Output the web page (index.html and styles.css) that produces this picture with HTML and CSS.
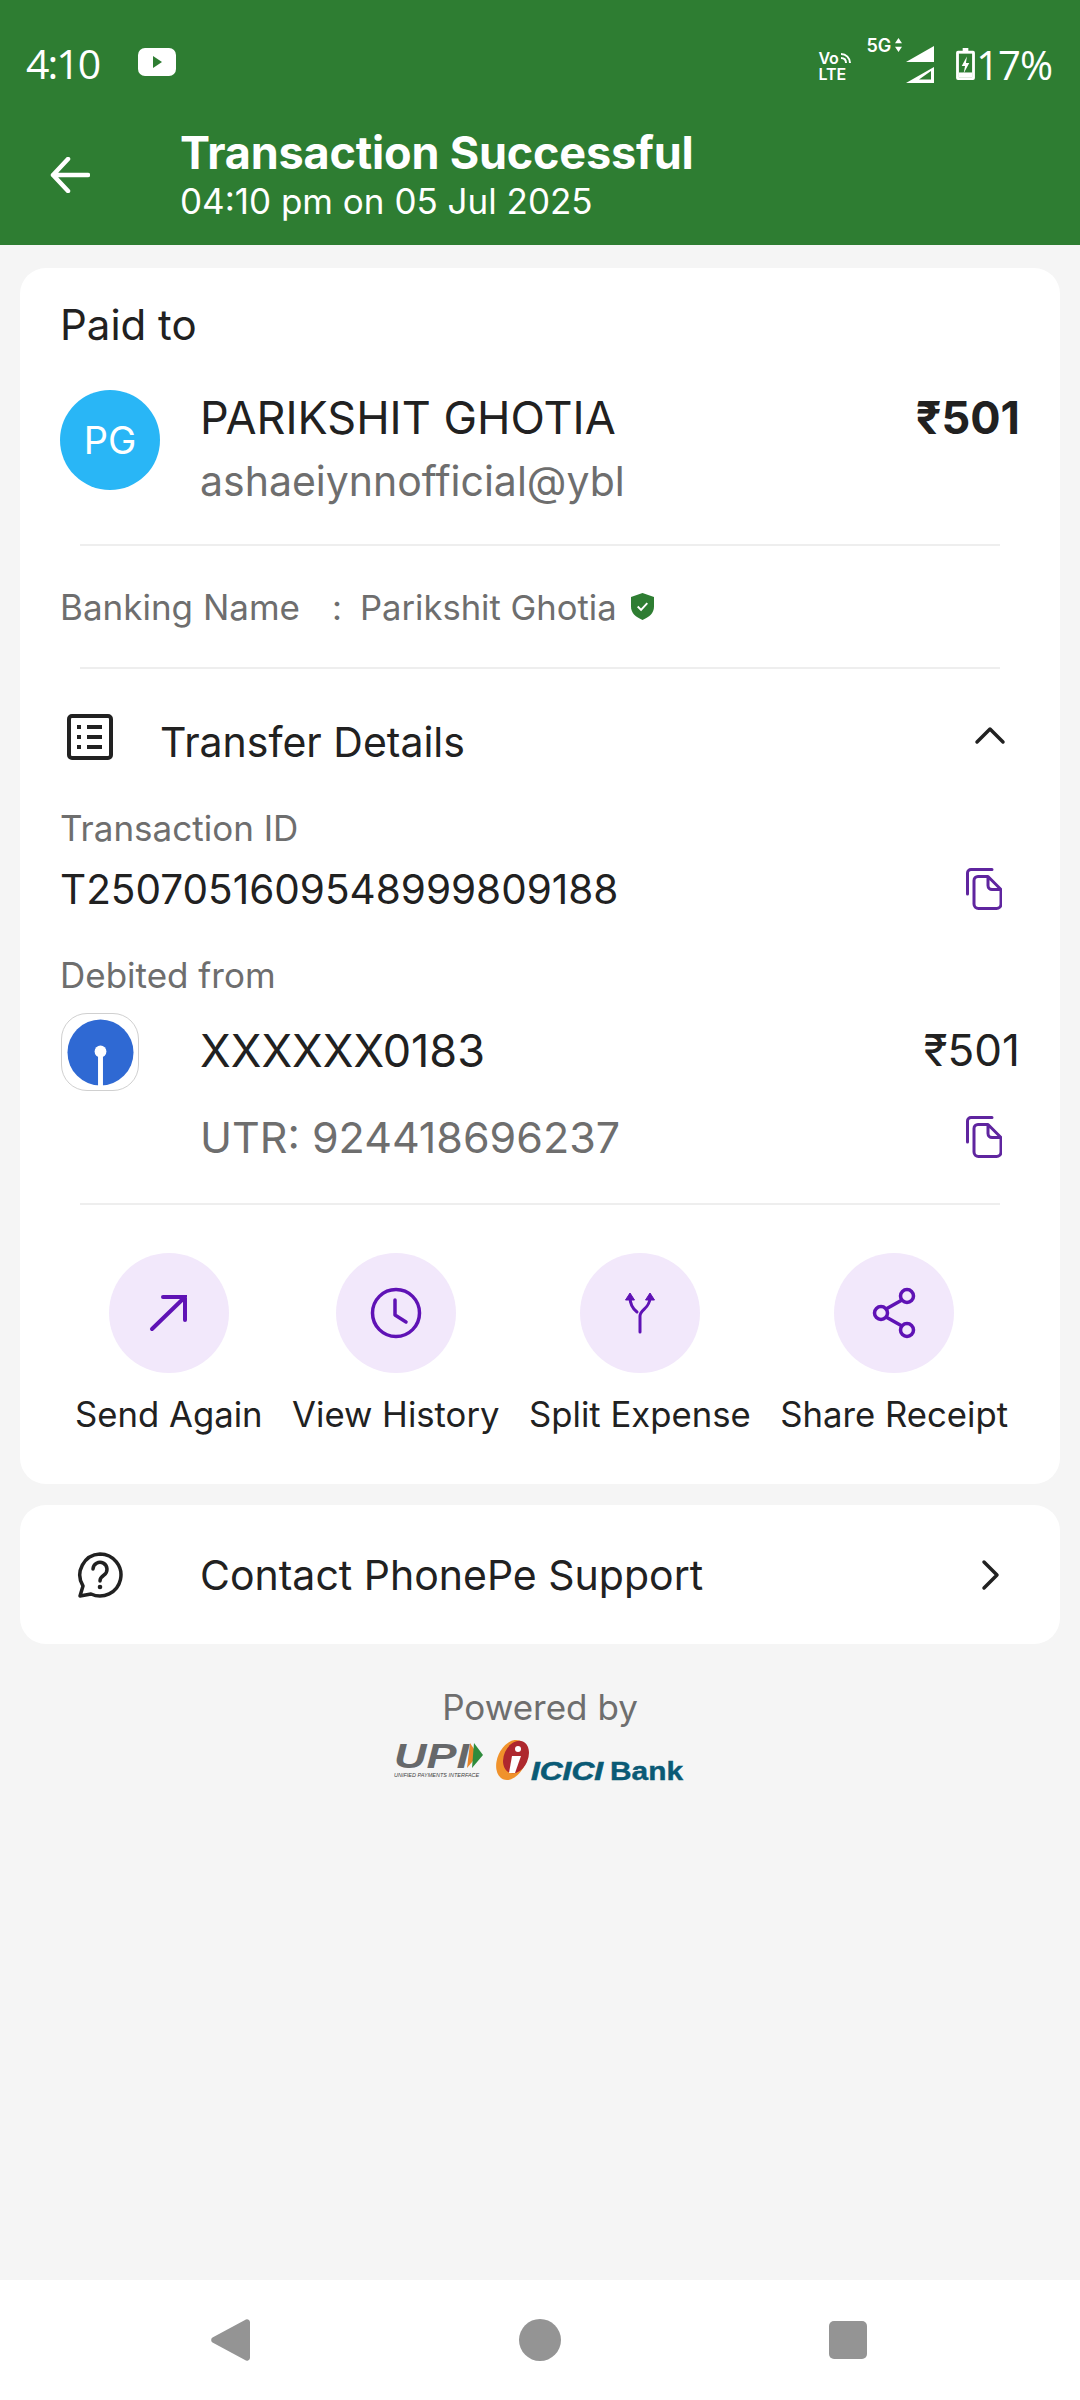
FILE: index.html
```html
<!DOCTYPE html>
<html lang="en">
<head>
    <meta charset="UTF-8">
    <meta name="viewport" content="width=device-width, initial-scale=1.0">
    <title>Transaction Successful</title>
    <link rel="stylesheet" href="styles.css">
</head>
<body>

<!-- Green Header -->
<div class="header">
    <div class="status-bar">
        <div class="status-left">
            <span class="clock">4:10</span>
            <svg class="yt-icon" viewBox="0 0 38 28"><rect width="38" height="28" rx="7" fill="#fff"/><path d="M15 8l9 6-9 6z" fill="#2e7d32"/></svg>
        </div>
        <div class="status-right">
            <div class="volte"><span>Vo<svg class="volte-waves" viewBox="0 0 12 12"><path d="M1 2c5 0 9 4 9 9M1 6c3 0 5 2 5 5" fill="none" stroke="#fff" stroke-width="2"/></svg></span><span>LTE</span></div>
            <span class="five-g">5G<svg class="five-g-arrows" viewBox="0 0 8 16"><path d="M4 0l4 6H0zM4 16l4-6H0z" fill="#fff"/></svg></span>
            <svg class="signal" viewBox="0 0 28 37"><path d="M28 0v16H0z" fill="#fff"/><path fill-rule="evenodd" d="M28 21v16H0zM25 25L13 33.500h12z" fill="#fff"/></svg>
            <svg class="battery" viewBox="0 0 20 34"><path d="M7 0h6v3h5a2 2 0 0 1 2 2v27a2 2 0 0 1-2 2H2a2 2 0 0 1-2-2V5a2 2 0 0 1 2-2h5z" fill="#fff"/><rect x="3" y="6" width="14" height="25" fill="#2e7d32"/><rect x="3" y="26" width="14" height="5" fill="#fff"/><path d="M11.500 9L6 19h3.500L8 27l6-11h-3.500z" fill="#fff"/></svg>
            <span class="battery-pct">17%</span>
        </div>
    </div>
    <div class="title-bar">
        <svg class="back-icon" viewBox="0 0 40 36"><path d="M38 18H3M18 2L3 18l15 16" fill="none" stroke="#fff" stroke-width="4.500" stroke-linecap="round" stroke-linejoin="round"/></svg>
        <div>
            <h1>Transaction Successful</h1>
            <p>04:10 pm on 05 Jul 2025</p>
        </div>
    </div>
</div>

<!-- Main Card -->
<div class="card main-card">
    <div class="paid-label">Paid to</div>

    <div class="payee-row">
        <div class="avatar">PG</div>
        <div class="payee-info">
            <div class="payee-name">PARIKSHIT GHOTIA</div>
            <div class="payee-upi">ashaeiynnofficial@ybl</div>
        </div>
        <div class="payee-amount">₹501</div>
    </div>

    <div class="divider"></div>

    <div class="banking-row">
        <span class="banking-key">Banking Name</span>
        <span class="banking-colon">:</span>
        <span>Parikshit Ghotia</span>
        <svg class="shield-icon" viewBox="0 0 24 28"><path d="M12 0l12 4v10c0 7-5 11-12 14C5 25 0 21 0 14V4z" fill="#2e7d32"/><path d="M7 14l3.500 3.500L17 10.500" fill="none" stroke="#fff" stroke-width="2"/></svg>
    </div>

    <div class="divider"></div>

    <div class="details-head">
        <svg class="list-icon" viewBox="0 0 46 46"><rect x="2" y="2" width="42" height="42" rx="3" fill="none" stroke="#212121" stroke-width="4"/><path d="M20 13h15M20 23h15M20 33h15" stroke="#212121" stroke-width="4"/><path d="M10 13h4M10 23h4M10 33h4" stroke="#212121" stroke-width="4"/></svg>
        <span class="details-title">Transfer Details</span>
        <svg class="chevron-up" viewBox="0 0 32 20"><path d="M3 17L16 4l13 13" fill="none" stroke="#212121" stroke-width="3.500" stroke-linecap="round" stroke-linejoin="round"/></svg>
    </div>

    <div class="field-label txn-label">Transaction ID</div>
    <div class="copy-row txn-row">
        <span class="txn-id">T2507051609548999809188</span>
        <svg class="copy-icon" viewBox="0 0 36 42"><path d="M1.500 26V5a3.500 3.500 0 0 1 3.500-3.500h21" fill="none" stroke="#5f259f" stroke-width="3" stroke-linecap="round"/><path d="M22 8.500H12a4 4 0 0 0-4 4V36a4.500 4.500 0 0 0 4.500 4.500h18A4.500 4.500 0 0 0 35 36V21.500L22 8.500v9a4 4 0 0 0 4 4h9" fill="none" stroke="#5f259f" stroke-width="3" stroke-linejoin="round"/></svg>
    </div>

    <div class="field-label debit-label">Debited from</div>
    <div class="bank-row">
        <div class="bank-logo">
            <svg viewBox="0 0 68 68"><circle cx="34" cy="34" r="33.500" fill="#2f69d3"/><rect x="31.500" y="34" width="5" height="34" fill="#fff"/><circle cx="34" cy="33" r="6" fill="#fff"/></svg>
        </div>
        <div class="bank-info">
            <div class="bank-line">
                <span class="account-no">XXXXXX0183</span>
                <span class="account-amount">₹501</span>
            </div>
            <div class="copy-row utr-row">
                <span class="utr">UTR: 924418696237</span>
                <svg class="copy-icon" viewBox="0 0 36 42"><path d="M1.500 26V5a3.500 3.500 0 0 1 3.500-3.500h21" fill="none" stroke="#5f259f" stroke-width="3" stroke-linecap="round"/><path d="M22 8.500H12a4 4 0 0 0-4 4V36a4.500 4.500 0 0 0 4.500 4.500h18A4.500 4.500 0 0 0 35 36V21.500L22 8.500v9a4 4 0 0 0 4 4h9" fill="none" stroke="#5f259f" stroke-width="3" stroke-linejoin="round"/></svg>
            </div>
        </div>
    </div>

    <div class="divider"></div>

    <!-- Action Buttons -->
    <div class="actions">
        <div class="action">
            <div class="action-circle">
                <svg viewBox="0 0 60 60"><path d="M13 46L46 14M24 14h22v23" fill="none" stroke="#5f12b5" stroke-width="4" stroke-linecap="round"/></svg>
            </div>
            <span>Send Again</span>
        </div>
        <div class="action">
            <div class="action-circle">
                <svg viewBox="0 0 60 60"><circle cx="30" cy="30" r="23.500" fill="none" stroke="#5f12b5" stroke-width="3.500"/><path d="M29 17v15l11 7" fill="none" stroke="#5f12b5" stroke-width="3.500" stroke-linecap="round" stroke-linejoin="round"/></svg>
            </div>
            <span>View History</span>
        </div>
        <div class="action">
            <div class="action-circle">
                <svg viewBox="0 0 60 60"><path d="M30 49V33c0-7 10-7 10-19M27 29c-4-3-7-7-7-15" fill="none" stroke="#5f12b5" stroke-width="3" stroke-linecap="round"/><path d="M15.500 17l4.500-7 4.500 7zM35.500 17l4.500-7 4.500 7z" fill="#5f12b5" stroke="#5f12b5" stroke-width="1" stroke-linejoin="round"/></svg>
            </div>
            <span>Split Expense</span>
        </div>
        <div class="action">
            <div class="action-circle">
                <svg viewBox="0 0 60 60"><circle cx="43" cy="13" r="6.500" fill="none" stroke="#5f12b5" stroke-width="3.500"/><circle cx="17" cy="30" r="6.500" fill="none" stroke="#5f12b5" stroke-width="3.500"/><circle cx="43" cy="47" r="6.500" fill="none" stroke="#5f12b5" stroke-width="3.500"/><path d="M22 26l16-9M22 34l16 9" stroke="#5f12b5" stroke-width="3.500"/></svg>
            </div>
            <span>Share Receipt</span>
        </div>
    </div>
</div>

<!-- Support Card -->
<div class="card support-card">
    <svg class="help-icon" viewBox="0 0 48 48"><path d="M24 3a21 21 0 1 1-9 40l-11 2 3-10A21 21 0 0 1 24 3z" fill="none" stroke="#212121" stroke-width="3.500" stroke-linejoin="round"/><path d="M17 18a7 7 0 1 1 11 6c-3 2-4 3-4 6" fill="none" stroke="#212121" stroke-width="3.500" stroke-linecap="round"/><circle cx="24" cy="36" r="2.300" fill="#212121"/></svg>
    <span class="support-text">Contact PhonePe Support</span>
    <svg class="chevron-right" viewBox="0 0 20 32"><path d="M4 3l13 13L4 29" fill="none" stroke="#212121" stroke-width="3.500" stroke-linecap="round" stroke-linejoin="round"/></svg>
</div>

<!-- Powered By -->
<div class="powered">
    <div class="powered-label">Powered by</div>
    <div class="powered-logos">
        <svg class="upi-logo" viewBox="0 0 90 46">
            <text x="0" y="31" class="upi-text" textLength="75" lengthAdjust="spacingAndGlyphs">UPI</text>
            <path d="M76 6l8 12-11 13z" fill="#e8862a"/><path d="M80 6l9 12-11 13z" fill="#2e8b3c"/>
            <text x="0" y="40" class="upi-sub">UNIFIED PAYMENTS INTERFACE</text>
        </svg>
        <svg class="icici-logo" viewBox="0 0 190 50">
            <ellipse cx="15.500" cy="23" rx="14" ry="21" transform="rotate(24 15.500 23)" fill="#f0922b"/>
            <ellipse cx="20" cy="20" rx="12" ry="17" transform="rotate(24 20 20)" fill="#ae282e"/>
            <circle cx="22" cy="12" r="3" fill="#fff"/>
            <path d="M16 19h9l-6 17h-6z" fill="#fff"/>
            <text x="35" y="43" class="icici-text" textLength="72" lengthAdjust="spacingAndGlyphs">ICICI</text>
            <text x="114" y="43" class="bank-text" textLength="73" lengthAdjust="spacingAndGlyphs">Bank</text>
        </svg>
    </div>
</div>

<!-- Bottom Navigation -->
<div class="nav-bar">
    <svg viewBox="0 0 42 44"><path d="M41 4v36a3 3 0 0 1-5 2L3.500 24.500a3 3 0 0 1 0-5L36 2a3 3 0 0 1 5 2z" fill="#949494"/></svg>
    <svg viewBox="0 0 42 44"><circle cx="21" cy="22" r="21" fill="#949494"/></svg>
    <svg viewBox="0 0 42 44"><rect x="0" y="3" width="38" height="38" rx="5" fill="#949494"/></svg>
</div>

</body>
</html>
```

FILE: styles.css
```css
/* Basic Reset */
* {
    box-sizing: border-box;
    margin: 0;
    padding: 0;
    font-family: Inter, "Noto Sans", sans-serif;
}

body {
    display: flex;
    flex-direction: column;
    height: 2400px;
    background-color: #f5f5f5;
    color: #212121;
}

svg {
    display: block;
    flex: none;
}

/* Header */
.header {
    height: 245px;
    background-color: #2e7d32;
    color: #fff;
    padding: 42px 28px 0 26px;
}

.status-bar {
    display: flex;
    justify-content: space-between;
    align-items: center;
    height: 44px;
}

.status-left {
    display: flex;
    align-items: center;
    gap: 39px;
}

.clock {
    font-family: "Open Sans", sans-serif;
    font-size: 41px;
    letter-spacing: -2px;
    margin-top: -2px;
}

.yt-icon {
    width: 38px;
    height: 28px;
    margin-bottom: 4px;
}

.status-right {
    display: flex;
    align-items: center;
}

.volte {
    display: flex;
    flex-direction: column;
    font-size: 16px;
    font-weight: 600;
    line-height: 16px;
    width: 40px;
    margin-top: 4px;
}

.volte span {
    display: flex;
    align-items: center;
}

.volte-waves {
    width: 12px;
    height: 12px;
    margin-left: 1px;
}

.five-g {
    display: flex;
    align-items: center;
    align-self: flex-start;
    font-size: 18px;
    font-weight: 600;
    margin-left: 8px;
    margin-top: -2px;
}

.five-g-arrows {
    width: 7px;
    height: 14px;
    margin-left: 4px;
}

.signal {
    width: 28px;
    height: 37px;
    margin-left: 4px;
}

.battery {
    width: 19px;
    height: 32px;
    margin-left: 22px;
}

.battery-pct {
    font-family: "Open Sans", sans-serif;
    font-size: 40px;
    letter-spacing: -1px;
    margin-left: 1px;
}

.title-bar {
    display: flex;
    align-items: center;
    margin-top: 40px;
}

.back-icon {
    width: 40px;
    height: 36px;
    margin-left: 24px;
}

.title-bar h1 {
    margin-left: 90px;
    font-size: 45px;
    font-weight: 700;
    line-height: 53px;
    letter-spacing: -0.2px;
    white-space: nowrap;
}

.title-bar p {
    margin-left: 90px;
    font-size: 35px;
    line-height: 44px;
    white-space: nowrap;
}

/* Cards */
.card {
    background-color: #fff;
    border-radius: 26px;
    margin: 0 20px;
}

.main-card {
    height: 1216px;
    margin-top: 23px;
    padding: 33px 40px 0 40px;
}

.paid-label {
    font-size: 42px;
    line-height: 48px;
}

.payee-row {
    display: flex;
    align-items: flex-start;
    margin-top: 40px;
    height: 155px;
}

.avatar {
    width: 100px;
    height: 100px;
    margin-top: 1px;
    border-radius: 50%;
    background-color: #29b6f6;
    color: #fff;
    font-size: 38px;
    display: flex;
    align-items: center;
    justify-content: center;
    flex: none;
}

.payee-info {
    margin-left: 40px;
    flex: 1;
}

.payee-name {
    font-size: 45px;
    line-height: 58px;
}

.payee-upi {
    margin-top: 5px;
    font-size: 41px;
    line-height: 58px;
    color: #6e6e6e;
}

.payee-amount {
    font-size: 45px;
    font-weight: 700;
    line-height: 58px;
}

.divider {
    height: 2px;
    margin: 0 20px;
    background-color: #eeeeee;
}

.banking-row {
    display: flex;
    align-items: center;
    height: 121px;
    font-size: 34.600px;
    color: #6e6e6e;
}

.banking-key {
    width: 272px;
    font-size: 35px;
}

.banking-colon {
    width: 28px;
}

.shield-icon {
    width: 23px;
    height: 27px;
    margin-left: 14px;
}

.details-head {
    display: flex;
    align-items: center;
    height: 90px;
    margin-top: 28px;
}

.list-icon {
    width: 46px;
    height: 46px;
    margin-left: 7px;
    margin-bottom: 10px;
}

.details-title {
    margin-left: 47px;
    font-size: 41px;
    flex: 1;
}

.chevron-up {
    width: 32px;
    height: 20px;
    margin-right: 14px;
    margin-bottom: 14px;
}

.field-label {
    font-size: 35px;
    line-height: 44px;
    color: #6e6e6e;
}

.txn-label {
    margin-top: 19px;
}

.copy-row {
    display: flex;
    align-items: center;
    justify-content: space-between;
}

.txn-row {
    height: 60px;
    margin-top: 9px;
}

.txn-id {
    font-size: 40.500px;
}

.copy-icon {
    width: 36px;
    height: 42px;
    margin-right: 18px;
}

.debit-label {
    margin-top: 34px;
}

.bank-row {
    display: flex;
    align-items: flex-start;
    margin-top: 13px;
    height: 193px;
}

.bank-logo {
    width: 78px;
    height: 78px;
    margin: 3px 0 0 1px;
    border: 1px solid #d0d0d0;
    border-radius: 26px;
    background-color: #fff;
    display: flex;
    align-items: center;
    justify-content: center;
    flex: none;
}

.bank-logo svg {
    width: 67px;
    height: 67px;
}

.bank-info {
    margin-left: 61px;
    flex: 1;
}

.bank-line {
    display: flex;
    justify-content: space-between;
    align-items: center;
    height: 80px;
}

.account-no {
    font-size: 45px;
}

.account-amount {
    font-size: 44px;
}

.utr-row {
    height: 60px;
    margin-top: 17px;
}

.utr {
    font-size: 43px;
    color: #6e6e6e;
}

/* Action Buttons */
.actions {
    display: flex;
    gap: 29.500px;
    margin-top: 48px;
    padding-left: 15px;
}

.action {
    display: flex;
    flex-direction: column;
    align-items: center;
    font-size: 34.700px;
    white-space: nowrap;
}

.action-circle {
    width: 120px;
    height: 120px;
    border-radius: 50%;
    background-color: #f2e8fb;
    display: flex;
    align-items: center;
    justify-content: center;
    margin-bottom: 20px;
}

.action-circle svg {
    width: 60px;
    height: 60px;
}

/* Support Card */
.support-card {
    display: flex;
    align-items: center;
    height: 139px;
    margin-top: 21px;
    padding: 0 60px 0 56px;
}

.help-icon {
    width: 48px;
    height: 48px;
}

.support-text {
    margin-left: 76px;
    font-size: 41px;
    flex: 1;
}

.chevron-right {
    width: 20px;
    height: 32px;
}

/* Powered By */
.powered {
    display: flex;
    flex-direction: column;
    align-items: center;
    margin-top: 41px;
}

.powered-label {
    font-size: 35px;
    line-height: 44px;
    color: #6e6e6e;
}

.powered-logos {
    display: flex;
    align-items: flex-start;
    gap: 12px;
    margin-top: 8px;
}

.upi-logo {
    width: 90px;
    height: 46px;
}

.icici-logo {
    width: 190px;
    height: 50px;
}

.upi-text {
    font-family: "Liberation Sans", sans-serif;
    font-size: 35px;
    font-weight: 700;
    font-style: italic;
    fill: #66686a;
}

.upi-sub {
    font-family: "Liberation Sans", sans-serif;
    font-size: 5.500px;
    font-style: italic;
    fill: #444;
}

.icici-text {
    font-family: "Liberation Sans", sans-serif;
    font-size: 25px;
    font-weight: 700;
    font-style: italic;
    fill: #0a5a75;
    stroke: #0a5a75;
    stroke-width: 0.6px;
}

.bank-text {
    font-family: "Liberation Sans", sans-serif;
    font-size: 25px;
    font-weight: 700;
    fill: #0a5a75;
    stroke: #0a5a75;
    stroke-width: 0.4px;
}

/* Bottom Navigation */
.nav-bar {
    margin-top: auto;
    height: 120px;
    background-color: #fff;
    display: flex;
    align-items: center;
    padding: 0 0 0 209px;
    gap: 268px;
}

.nav-bar svg {
    width: 42px;
    height: 44px;
}
```
